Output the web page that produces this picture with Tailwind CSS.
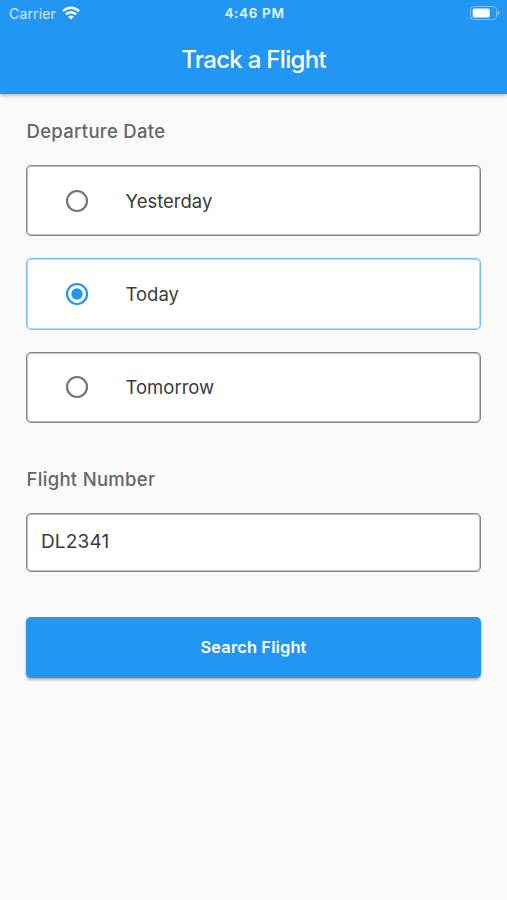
<!DOCTYPE html>
<html lang="en">
<head>
<meta charset="utf-8">
<meta name="viewport" content="width=device-width, initial-scale=1">
<title>Track a Flight</title>
<script src="https://cdn.jsdelivr.net/npm/@tailwindcss/browser@4"></script>
</head>
<body class="min-h-screen bg-[#fafafa] font-['Inter','Liberation_Sans',sans-serif] text-[#3a3a3a]">
<header class="h-[94px] bg-[#2196f3] text-white shadow-[0_1px_4px_rgba(0,0,0,0.35)]">
  <div class="grid h-[27px] grid-cols-3 items-center pl-[9px] pr-[7px]">
    <div class="flex items-center gap-[6px]">
      <span class="pt-px text-[14px] leading-none tracking-[0.15px] text-white/80">Carrier</span>
      <svg class="-mt-px h-[14px] w-[18px]" viewBox="0 0 18 14" fill="none" stroke="#fff" stroke-width="2.5">
        <path d="M1 5.2C5.5 .6 12.5 .6 17 5.2"/>
        <path d="M3.9 8.4C6.8 5.5 11.2 5.5 14.1 8.4"/>
        <path d="M9 13.5 6 10.6C7.7 9 10.3 9 12 10.6Z" fill="#fff" stroke="none"/>
      </svg>
    </div>
    <span class="whitespace-nowrap pt-px text-center text-[13.5px] font-semibold leading-none tracking-[0.65px] text-white/90">4:46 PM</span>
    <svg class="-mt-px h-[14px] w-[32px] justify-self-end" viewBox="0 0 32 14">
      <rect x="2.5" y=".5" width="26" height="13" rx="3.2" fill="none" stroke="#fff" stroke-opacity=".42"/>
      <rect x="4.7" y="2.5" width="17" height="9" rx="1.5" fill="#fff"/>
      <path d="M29.7 4.5C32.2 5.2 32.2 8.8 29.7 9.5Z" fill="#fff" fill-opacity=".45"/>
    </svg>
  </div>
  <h1 class="pt-[18px] text-center text-[24px] font-medium leading-[30px] tracking-[-0.7px]">Track a Flight</h1>
</header>
<main class="px-[26px] pt-[25px]">
  <h2 class="pl-[0.5px] text-[18.5px] font-medium leading-6 tracking-[0.3px] text-[#666]">Departure Date</h2>
  <div class="mt-[22px] flex flex-col gap-[22px] text-[18.5px]" role="radiogroup" aria-label="Departure Date">
    <div class="flex h-[71.3px] items-center gap-[37px] rounded-[5px] border border-[#858585] bg-white pl-[37.5px] shadow-[inset_0_0_0_1px_rgba(100,100,100,0.4)]" role="radio" aria-checked="false">
      <svg class="size-[24px]" viewBox="0 0 24 24"><circle cx="12" cy="12" r="10" fill="none" stroke="#757575" stroke-width="2.2"/></svg>
      <span class="pt-[2px]">Yesterday</span>
    </div>
    <div class="flex h-[71.3px] items-center gap-[37px] rounded-[5px] border border-[#74bdf6] bg-white pl-[37.5px] shadow-[inset_0_0_0_1px_rgba(33,150,243,0.35)]" role="radio" aria-checked="true">
      <svg class="size-[24px]" viewBox="0 0 24 24"><circle cx="12" cy="12" r="10" fill="none" stroke="#2196f3" stroke-width="2.2"/><circle cx="12" cy="12" r="5.7" fill="#2196f3"/></svg>
      <span class="pt-[2px]">Today</span>
    </div>
    <div class="flex h-[71.3px] items-center gap-[37px] rounded-[5px] border border-[#858585] bg-white pl-[37.5px] shadow-[inset_0_0_0_1px_rgba(100,100,100,0.4)]" role="radio" aria-checked="false">
      <svg class="size-[24px]" viewBox="0 0 24 24"><circle cx="12" cy="12" r="10" fill="none" stroke="#757575" stroke-width="2.2"/></svg>
      <span class="pt-[2px]">Tomorrow</span>
    </div>
  </div>
  <h2 class="mt-[44px] pl-[0.5px] text-[18.5px] font-medium leading-6 tracking-[0.3px] text-[#666]">Flight Number</h2>
  <div class="mt-[22px] flex h-[59px] items-center rounded-[5px] border border-[#858585] bg-white px-[14px] pb-px text-[19px] tracking-[0.15px] shadow-[inset_0_0_0_1px_rgba(100,100,100,0.4)]">DL2341</div>
  <button class="mt-[45px] flex h-[61px] w-full items-center justify-center rounded-[5px] bg-[#2196f3] text-[16.5px] font-semibold tracking-[0.1px] text-white shadow-[0_2px_3px_rgba(0,0,0,0.3)]">Search Flight</button>
</main>
</body>
</html>
